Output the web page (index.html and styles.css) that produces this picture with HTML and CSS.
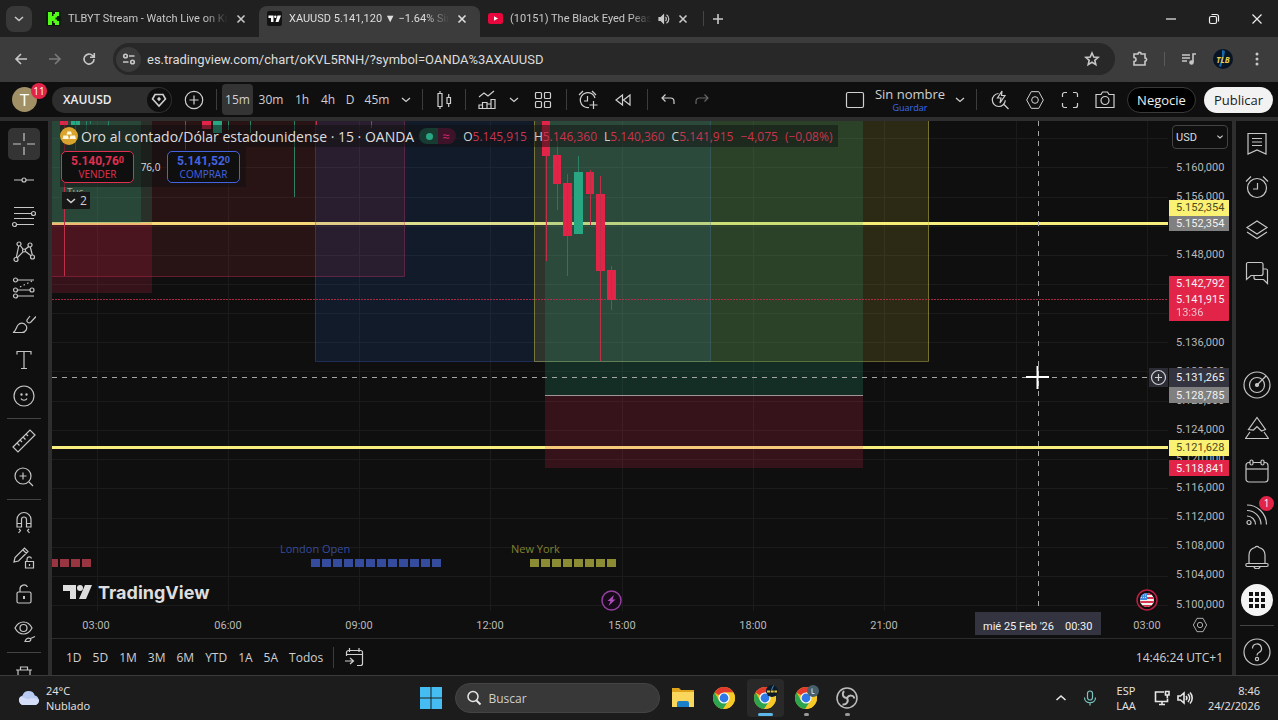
FILE: index.html
```html
<!DOCTYPE html>
<html lang="es">
<head>
<meta charset="utf-8">
<meta name="viewport" content="width=device-width, initial-scale=1">
<title>XAUUSD 5.141,120 ▼ −1.64% Sin nombre</title>
<link rel="stylesheet" href="styles.css">
</head>
<body>
<svg class="defs" aria-hidden="true">
  <symbol id="i-close" viewBox="0 0 12 12"><path d="M2.500 2.500l7 7M9.500 2.500l-7 7"/></symbol>
  <symbol id="i-down" viewBox="0 0 12 12"><path d="M2 4l4 3.500L10 4"/></symbol>
  <symbol id="i-settings" viewBox="0 0 24 24"><path d="M7.500 2h9l5.500 10-5.500 10h-9L2 12z"/><circle cx="12" cy="12" r="4"/></symbol>
  <symbol id="i-alarm" viewBox="0 0 24 24"><circle cx="12" cy="13" r="9.500"/><path d="M12.500 8v6H8M1 6.500l5-5M18 1.500l5 5"/></symbol>
  <symbol id="i-chrome" viewBox="0 0 24 24"><circle cx="12" cy="12" r="11" fill="#e8b921"/><path d="M12 12L2.500 6.500A11 11 0 0 1 21.500 6.500H12z" fill="#e23b2e"/><path d="M12 12L7.200 14.800 2.500 6.500A11 11 0 0 0 11.200 23l5.300-8.500z" fill="#2da44e"/><path d="M12 6.500h9.500A11 11 0 0 1 11.200 23l5.400-8.500z" fill="#f6c927"/><circle cx="12" cy="12" r="5.600" fill="#fff"/><circle cx="12" cy="12" r="4.400" fill="#2f78e8"/></symbol>
</svg>

<div class="window">
  <header class="tabstrip">
    <button class="tab-search" aria-label="Buscar pestañas"><svg class="ic s12 bold"><use href="#i-down"/></svg></button>
    <div class="tab">
      <svg class="favicon" viewBox="0 0 15 15"><rect width="15" height="15" rx="2" fill="#0c1c0a"/><path d="M2 1h4v4h1.500V3H9V1h4v4h-2v1.500H9.500v2H11V10h2v4H9v-2H7.500v-2H6v4H2z" fill="#53fc18"/></svg>
      <span class="tab-title">TLBYT Stream - Watch Live on Kick</span>
      <button class="tab-close" aria-label="Cerrar"><svg class="ic s12 bold"><use href="#i-close"/></svg></button>
    </div>
    <div class="tab active">
      <svg class="favicon" viewBox="0 0 15 15"><rect width="15" height="15" rx="2" fill="#131313"/><path d="M1.500 4.500h5V11H4V7H1.500zM10.500 4.500H14L11.500 11H8.500z" fill="#fff"/><circle cx="8.300" cy="5.700" r="1.200" fill="#fff"/></svg>
      <span class="tab-title">XAUUSD 5.141,120 ▼ −1.64% Sin nombre</span>
      <button class="tab-close" aria-label="Cerrar"><svg class="ic s12 bold"><use href="#i-close"/></svg></button>
    </div>
    <div class="tab">
      <svg class="favicon" viewBox="0 0 15 15"><rect y="2" width="15" height="11" rx="2.500" fill="#e8063c"/><path d="M6 5.200v4.600l4-2.300z" fill="#fff"/></svg>
      <span class="tab-title">(10151) The Black Eyed Peas - Greatest</span>
      <svg class="ic s12 speaker" viewBox="0 0 12 12"><path d="M1 4.500h2L5.500 2v8L3 7.500H1z"/><path d="M7.500 4a2.800 2.800 0 0 1 0 4M8.500 1.800a5 5 0 0 1 0 8.400"/></svg>
      <button class="tab-close" aria-label="Cerrar"><svg class="ic s12 bold"><use href="#i-close"/></svg></button>
    </div>
    <span class="tab-sep"></span>
    <button class="new-tab" aria-label="Nueva pestaña"><svg class="ic s12 bold" viewBox="0 0 12 12"><path d="M6 1v10M1 6h10"/></svg></button>
    <div class="win-controls">
      <button aria-label="Minimizar"><svg class="ic s12" viewBox="0 0 12 12"><path d="M1 6h10"/></svg></button>
      <button aria-label="Restaurar"><svg class="ic s12" viewBox="0 0 12 12"><rect x="1.500" y="3.500" width="7" height="7" rx="1.500"/><path d="M3.500 1.500h5a2 2 0 0 1 2 2v5"/></svg></button>
      <button aria-label="Cerrar ventana"><svg class="ic s12" viewBox="0 0 12 12"><path d="M1.500 1.500l9 9M10.500 1.500l-9 9"/></svg></button>
    </div>
  </header>

  <nav class="toolbar">
    <button class="nav-btn" aria-label="Atrás"><svg class="ic s16 bold" viewBox="0 0 16 16"><path d="M14 8H3M8 3L3 8l5 5"/></svg></button>
    <button class="nav-btn dim" aria-label="Adelante"><svg class="ic s16 bold" viewBox="0 0 16 16"><path d="M2 8h11M8 3l5 5-5 5"/></svg></button>
    <button class="nav-btn" aria-label="Recargar"><svg class="ic s16 bold" viewBox="0 0 16 16"><path d="M13 8a5 5 0 1 1-1.500-3.500L13.300 6.200M13.300 2v4.200H9"/></svg></button>
    <div class="omnibox">
      <button class="site-info" aria-label="Información del sitio"><svg class="ic s16 bold" viewBox="0 0 16 16"><circle cx="4.500" cy="5" r="1.800"/><path d="M8 5h5.500M2 11h5.500"/><circle cx="11.500" cy="11" r="1.800"/></svg></button>
      <input class="url" type="text" aria-label="Dirección" value="es.tradingview.com/chart/oKVL5RNH/?symbol=OANDA%3AXAUUSD">
      <button class="star" aria-label="Favorito"><svg class="ic s16 bold" viewBox="0 0 16 16"><path d="M8 2l1.800 4 4.300.4-3.300 2.900 1 4.300L8 11.300l-3.800 2.300 1-4.300L1.900 6.400 6.200 6z"/></svg></button>
    </div>
    <button class="ext" aria-label="Extensiones"><svg class="ic s16 bold" viewBox="0 0 16 16"><path d="M2 3h4a1.600 1.600 0 0 1 3.200 0H13v4a1.600 1.600 0 0 1 0 3.200V14H2v-3.500a2 2 0 0 0 0-4z"/></svg></button>
    <span class="bar-sep"></span>
    <button class="ext" aria-label="Multimedia"><svg class="ic s16 bold" viewBox="0 0 16 16"><path d="M1 4h8M1 7h8M1 10h5M12 11V3h3"/><circle cx="10.500" cy="11.500" r="1.500" fill="currentColor"/></svg></button>
    <button class="ext" aria-label="Perfil"><svg class="profile" viewBox="0 0 20 20"><circle cx="10" cy="10" r="10" fill="#071426"/><path d="M9 1l3 1-1 6-3 10-2-1 3-8z" fill="#1c67a8"/><text x="10" y="14" text-anchor="middle" class="tlb">TLB</text></svg></button>
    <button class="ext" aria-label="Menú"><svg class="ic s16 dots" viewBox="0 0 16 16"><circle cx="8" cy="3" r="1.500"/><circle cx="8" cy="8" r="1.500"/><circle cx="8" cy="13" r="1.500"/></svg></button>
  </nav>

  <main class="app">
    <div class="topbar">
      <button class="avatar">T<span class="badge">11</span></button>
      <div class="symbol"><button class="symbol-name">XAUUSD</button><button class="symbol-mark" aria-label="Marca"><svg class="ic s16 bold" viewBox="0 0 16 16"><path d="M4 2.500h8L14.500 7 8 14 1.500 7z"/><path d="M8 4.800l2 2.200-2 2.200L6 7z" fill="currentColor" stroke="none"/></svg></button></div>
      <button class="tb w34" aria-label="Comparar"><svg class="ic s20" viewBox="0 0 20 20"><circle cx="10" cy="10" r="8.700"/><path d="M10 5.500v9M5.500 10h9"/></svg></button>
      <span class="vsep"></span>
      <button class="tb tf on">15m</button><button class="tb tf w36">30m</button><button class="tb tf w26">1h</button><button class="tb tf w26">4h</button><button class="tb tf w18">D</button><button class="tb tf w36">45m</button>
      <button class="tb w22" aria-label="Más intervalos"><svg class="ic s12"><use href="#i-down"/></svg></button>
      <span class="vsep"></span>
      <button class="tb" aria-label="Velas"><svg class="ic s20" viewBox="0 0 20 20"><path d="M4 3.500h4v13H4zM6 1v2.500M6 16.500V19M13 7.500h3.500v6H13zM14.700 4v3.500M14.700 13.500V17"/></svg></button>
      <span class="vsep"></span>
      <button class="tb" aria-label="Indicadores"><svg class="ic s20" viewBox="0 0 20 20"><path d="M2 7l5-4 4 3 6-5M2 18.500v-3.500h3.500v3.500zM5.500 18.500v-6H10v6zM10 18.500v-4.500h4v4.500zM14 18.500V9.500h4v9z"/></svg></button>
      <button class="tb w22" aria-label="Favoritos"><svg class="ic s12"><use href="#i-down"/></svg></button>
      <button class="tb w36" aria-label="Plantillas"><svg class="ic s20" viewBox="0 0 20 20"><rect x="2.500" y="2.500" width="6" height="6" rx="1"/><rect x="11.500" y="2.500" width="6" height="6" rx="1"/><rect x="2.500" y="11.500" width="6" height="6" rx="1"/><rect x="11.500" y="11.500" width="6" height="6" rx="1"/></svg></button>
      <span class="vsep"></span>
      <button class="tb" aria-label="Alerta"><svg class="ic s20" viewBox="0 0 20 20"><path d="M17 8a7.500 7.500 0 1 0-6 9.500M9.500 6v5H6M1 5l4-4M14 1l4 4M11.500 15h8M15.500 11v8"/></svg></button>
      <button class="tb w38" aria-label="Repetición"><svg class="ic s20" viewBox="0 0 20 20"><path d="M9.500 5v10L3 10zM17 5v10l-6.500-5z"/></svg></button>
      <span class="vsep"></span>
      <button class="tb w30" aria-label="Deshacer"><svg class="ic s16" viewBox="0 0 16 16"><path d="M5.500 2.500L2 6l3.500 3.500M2 6h8.500a3.500 3.500 0 0 1 3.500 3.500V12"/></svg></button>
      <button class="tb w38 dim" aria-label="Rehacer"><svg class="ic s16" viewBox="0 0 16 16"><path d="M10.500 2.500L14 6l-3.500 3.500M14 6H5.500A3.500 3.500 0 0 0 2 9.500V12"/></svg></button>
      <span class="spring"></span>
      <button class="tb" aria-label="Diseño"><svg class="ic s20" viewBox="0 0 20 20"><rect x="1.500" y="2.500" width="17" height="15" rx="1.500"/></svg></button>
      <button class="layout-name">Sin nombre<small>Guardar</small></button>
      <button class="tb w22" aria-label="Diseños"><svg class="ic s12"><use href="#i-down"/></svg></button>
      <span class="vsep"></span>
      <button class="tb w35" aria-label="Búsqueda rápida"><svg class="ic s20" viewBox="0 0 20 20"><path d="M8.500 3.500a6.500 6.500 0 1 0 6.800 6.800M13.500 14l5 5M12 1L7.500 8H11l-1 5 5-7.500h-3.500z"/></svg></button>
      <button class="tb w35" aria-label="Configuración"><svg class="ic s20"><use href="#i-settings"/></svg></button>
      <button class="tb w35" aria-label="Pantalla completa"><svg class="ic s20" viewBox="0 0 20 20"><path d="M2.500 7V4.500a2 2 0 0 1 2-2H7M13 2.500h2.500a2 2 0 0 1 2 2V7M17.500 13v2.500a2 2 0 0 1-2 2H13M7 17.500H4.500a2 2 0 0 1-2-2V13"/></svg></button>
      <button class="tb w35" aria-label="Captura"><svg class="ic s20" viewBox="0 0 20 20"><path d="M1 4.500h5L7.500 2h5L14 4.500h5v13H1z"/><circle cx="10" cy="10.500" r="4"/></svg></button>
      <button class="pill dark">Negocie</button>
      <button class="pill light">Publicar</button>
    </div>

    <div class="workspace">
      <aside class="rail left">
        <button class="rail-btn on" aria-label="Cruz"><svg class="ic s24" viewBox="0 0 24 24"><path d="M12 1v8M12 15v8M1 12h8M15 12h8"/></svg></button>
        <button class="rail-btn" aria-label="Líneas"><svg class="ic s24" viewBox="0 0 24 24"><circle cx="12" cy="12" r="2"/><path d="M2 12h8M14 12h8"/></svg></button>
        <button class="rail-btn" aria-label="Fibonacci"><svg class="ic s24" viewBox="0 0 24 24"><path d="M2 3.500h20M2 9.500h17.500M2 14.500h20M4.500 20.500H22"/><circle cx="21.500" cy="9.500" r="2"/><circle cx="2.500" cy="20.500" r="2"/></svg></button>
        <button class="rail-btn" aria-label="Patrones"><svg class="ic s24" viewBox="0 0 24 24"><circle cx="7" cy="4" r="2"/><circle cx="18" cy="5" r="2"/><circle cx="4" cy="19.500" r="2"/><circle cx="20.500" cy="17" r="2"/><circle cx="12" cy="10.500" r="1.500"/><path d="M6.700 6L4.300 17.500M8.300 5.500l2.800 3.800M16.800 6.500L13 9.500M18.300 7l2 8M11 11.800L5 18M13.300 11.300l5.700 4.500"/></svg></button>
        <button class="rail-btn" aria-label="Proyección"><svg class="ic s24" viewBox="0 0 24 24"><circle cx="3.500" cy="4" r="2"/><circle cx="3.500" cy="14" r="2"/><circle cx="3.500" cy="20" r="2"/><circle cx="20" cy="14" r="2"/><path d="M5.500 4H22M5.500 14H18M5.500 20H22"/><path d="M8 11l12-6" stroke-dasharray="1.500 2.500"/></svg></button>
        <button class="rail-btn" aria-label="Pincel"><svg class="ic s24" viewBox="0 0 24 24"><path d="M1 20.500c3-1 3-5 5-7.500s6-2.500 8 .5-.5 7-4 7zM24 4.500l-5.500 6c-2 1-4-.5-3.500-2.500L18 4"/></svg></button>
        <button class="rail-btn" aria-label="Texto"><svg class="ic s24" viewBox="0 0 24 24"><path d="M5 6.500V3.500h14v3M12 3.500v17M9 20.500h6"/></svg></button>
        <button class="rail-btn" aria-label="Emoji"><svg class="ic s24" viewBox="0 0 24 24"><circle cx="12" cy="12" r="10"/><path d="M9 14.500c1 2.300 5 2.300 6 0"/><circle cx="9.500" cy="10.500" r=".6" fill="currentColor"/><circle cx="14.500" cy="10.500" r=".6" fill="currentColor"/></svg></button>
        <span class="hsep"></span>
        <button class="rail-btn" aria-label="Regla"><svg class="ic s24" viewBox="0 0 24 24"><path d="M1 18L18 1l5 5L6 23zM5 14l2.500 2.500M8 11l2 2M11 8l2.500 2.500M14 5l2 2"/></svg></button>
        <button class="rail-btn" aria-label="Acercar"><svg class="ic s24" viewBox="0 0 24 24"><circle cx="11" cy="11" r="8"/><path d="M17 17l4 4M11 7.500v7M7.500 11h7"/></svg></button>
        <span class="hsep"></span>
        <button class="rail-btn" aria-label="Imán"><svg class="ic s24" viewBox="0 0 24 24"><path d="M5 17V9.500a7 7 0 0 1 14 0V17h-4.500V9.500a2.500 2.500 0 0 0-5 0V17zM5 13.500h4.500M14.500 13.500H19M7 19l1.500 1.500L6.500 23M17 19l-1.500 1.500 2 2.500"/></svg></button>
        <button class="rail-btn" aria-label="Modo dibujo"><svg class="ic s24" viewBox="0 0 24 24"><path d="M2 16l1-4.500L12.500 2l3.500 3.500L6.500 15zM11 4l3.500 3.500M13.500 15.500h8v6.500h-8zM15 15.500V13a2.300 2.300 0 0 1 4.500-.5M17.500 18v2"/></svg></button>
        <button class="rail-btn" aria-label="Bloquear"><svg class="ic s24" viewBox="0 0 24 24"><rect x="5" y="10" width="14" height="11" rx="1.500"/><path d="M8 10V7a4 4 0 0 1 7.500-2"/><path d="M12 14v3" stroke-width="2"/></svg></button>
        <button class="rail-btn" aria-label="Ocultar"><svg class="ic s24" viewBox="0 0 24 24"><path d="M3 10c4-8 13-8 17 0-4 8-13 8-17 0z"/><circle cx="11.500" cy="10" r="3.500"/><path d="M13 23.500c1-3 3-4 5-3s0 3-1.500 3zM18.500 20.500l4.500-2"/></svg></button>
        <span class="hsep"></span>
        <button class="rail-btn" aria-label="Eliminar"><svg class="ic s24" viewBox="0 0 24 24"><path d="M4 7h16M8.500 7V4h7v3M6 7v14h12V7"/></svg></button>
      </aside>

      <section class="chart-area">
        <div class="plot">
          <svg class="plot-svg" viewBox="52 121 1116 490" preserveAspectRatio="xMinYMin slice">
            <path class="grid" d="M52 138.500H1168M52 167.500H1168M52 197.500H1168M52 226.500H1168M52 255.500H1168M52 284.500H1168M52 313.500H1168M52 342.500H1168M52 371.500H1168M52 401.500H1168M52 430.500H1168M52 459.500H1168M52 488.500H1168M52 518.500H1168M52 547.500H1168M52 576.500H1168M52 605.500H1168M97.500 121V611M228.500 121V611M359.500 121V611M490.500 121V611M622.500 121V611M753.500 121V611M884.500 121V611M1016.500 121V611M1147.500 121V611"/>
            <path class="level" d="M52 223.500H1168M52 447.500H1168"/>
            <rect class="f-red" x="52" y="121" width="352" height="155"/>
            <path class="b-red" d="M52 276.500H404.500V121"/>
            <rect class="f-blue" x="315" y="121" width="395" height="240"/>
            <path class="b-blue" d="M315.500 121V361.500H710.500V121"/>
            <rect class="f-yellow" x="534" y="121" width="395" height="240"/>
            <path class="b-yellow" d="M534.500 121V361.500H928.500V121"/>
            <rect class="f-green" x="52" y="121" width="100" height="102"/>
            <rect class="f-green" x="52" y="121" width="89" height="102"/>
            <rect class="f-loss" x="52" y="223" width="100" height="70"/>
            <rect class="f-green" x="545" y="121" width="318" height="274"/>
            <rect class="f-loss" x="545" y="395" width="318" height="73"/>
            <path class="entry" d="M545 395.500H863"/>
            <g class="up">
              <rect x="71" y="121" width="9" height="4"/><rect x="213" y="121" width="9" height="12"/><rect x="574" y="172" width="9" height="62"/>
              <path d="M75.500 121V150M86.500 121V131M90.500 121V124M108.500 121V126M228.500 121V130M250.500 121V133M294.500 121V197M578.500 156V172"/>
            </g>
            <g class="down">
              <rect x="60" y="121" width="8" height="4"/><rect x="202" y="121" width="9" height="8"/>
              <rect x="542" y="121" width="8" height="35"/><rect x="553" y="155" width="8" height="29"/><rect x="563" y="183" width="9" height="53"/><rect x="586" y="172" width="8" height="22"/><rect x="596" y="194" width="9" height="77"/><rect x="607" y="270" width="9" height="30"/>
              <path d="M64.500 121V276M185.500 121V150M316.500 121V125M371.500 121V128M546.500 155V261M557.500 138V210M567.500 174V276M590.500 170V225M600.500 176V361M611.500 266V310"/>
            </g>
            <path class="last" d="M52 299.500H1168"/>
            <path class="s-red" d="M52 563H58M60 563H69M71 563H80M82 563H91"/>
            <path class="s-blue" d="M311 563H442"/>
            <path class="s-yellow" d="M530 563H617"/>
            <text class="t-blue" x="280" y="553">London Open</text>
            <text class="t-yellow" x="511" y="553">New York</text>
            <g class="tvlogo"><path d="M63 585h13v14h-6v-8h-7zM85 585h7l-6 14h-7z"/><circle cx="80" cy="588" r="3"/><text x="98" y="599">TradingView</text></g>
            <circle cx="611.500" cy="600.500" r="9.500" class="event"/><path class="bolt" d="M614 595l-6.500 6h3l-2 5 7-6.500h-3z"/>
            <circle cx="1147" cy="600" r="10" fill="#16090d" stroke="#b92143" stroke-width="1.500"/>
            <clipPath id="flag"><circle cx="1147" cy="600" r="7"/></clipPath>
            <g clip-path="url(#flag)"><path fill="#f3f3f3" d="M1140 593h14v14h-14z"/><path stroke="#d9344f" stroke-width="2" d="M1140 594h14M1140 598h14M1140 602h14M1140 606h14"/><path fill="#3d8be0" d="M1140 593h7v7h-7z"/><path d="M1141 595h6M1141 597.500h6" stroke="#cfe2f7" stroke-dasharray="1 1"/></g>
            <path class="cross" d="M52 377.500H1147M1038.500 121V611"/>
            <path class="pointer" d="M1026 377H1049M1037.500 366V389"/>
            <rect x="1149" y="368" width="19" height="19" fill="#2b2c36"/><circle cx="1158.500" cy="377.500" r="7" class="plus"/><path class="plus" d="M1155 377.500h7M1158.500 374v7"/>
          </svg>
          <div class="legend">
            <div class="legend-row">
              <svg class="gold" viewBox="0 0 18 18"><circle cx="9" cy="9" r="9" fill="#d9a42e"/><path d="M6.500 7.500l1-3h3.500l1 3zM2.500 12l1-3.500H8l.8 3.500zM9.500 12l1-3.500H15l1 3.500z" fill="#fff7df"/></svg>
              <span class="legend-title">Oro al contado/Dólar estadounidense · 15 · OANDA</span>
              <span class="status"><i></i><b>≈</b></span>
              <span class="ohlc"><span>O<em>5.145,915</em></span><span>H<em>5.146,360</em></span><span>L<em>5.140,360</em></span><span>C<em>5.141,915</em></span><span><em>−4,075</em></span><span><em>(−0,08%)</em></span></span>
            </div>
            <div class="trade-row">
              <button class="trade sell"><b>5.140,76<sup>0</sup></b>VENDER</button>
              <span class="spread">76,0</span>
              <button class="trade buy"><b>5.141,52<sup>0</sup></b>COMPRAR</button>
            </div>
            <div class="hidden-label">Tus</div>
            <button class="collapse"><svg class="ic s12 bold"><use href="#i-down"/></svg>2</button>
          </div>
        </div>
        <div class="price-axis">
          <svg class="axis-svg" viewBox="1168 121 64 490" preserveAspectRatio="xMinYMin slice">
            <g class="ax"><text x="1176" y="171">5.160,000</text><text x="1176" y="200">5.156,000</text><text x="1176" y="258">5.148,000</text><text x="1176" y="346">5.136,000</text><text x="1176" y="375">5.132,000</text><text x="1176" y="404">5.128,000</text><text x="1176" y="433">5.124,000</text><text x="1176" y="462">5.120,000</text><text x="1176" y="491">5.116,000</text><text x="1176" y="520">5.112,000</text><text x="1176" y="549">5.108,000</text><text x="1176" y="578">5.104,000</text><text x="1176" y="608">5.100,000</text></g>
            <path fill="#fbf173" d="M1169 200h60v16h-60zM1169 440h60v16h-60z"/>
            <path fill="#808080" d="M1169 216h60v15h-60zM1169 387h60v16h-60z"/>
            <path fill="#e22449" d="M1169 276h60v44a1 1 0 0 1-1 1h-59zM1169 460h60v16h-60z"/>
            <path fill="#33343f" d="M1169 368h60v19h-60z"/>
            <g class="tagdark"><text x="1176" y="211">5.152,354</text><text x="1176" y="451">5.121,628</text></g>
            <g class="tag"><text x="1176" y="227">5.152,354</text><text x="1176" y="287">5.142,792</text><text x="1176" y="303">5.141,915</text><text x="1176" y="316" opacity=".75">13:36</text><text x="1176" y="381">5.131,265</text><text x="1176" y="399">5.128,785</text><text x="1176" y="472">5.118,841</text></g>
          </svg>
          <label class="currency"><select aria-label="Moneda"><option>USD</option></select><svg class="ic s12 bold"><use href="#i-down"/></svg></label>
        </div>
        <div class="time-axis">
          <svg class="axis-svg" viewBox="52 611 1116 27" preserveAspectRatio="xMinYMin slice">
            <g class="ax mid"><text x="96" y="629">03:00</text><text x="228" y="629">06:00</text><text x="359" y="629">09:00</text><text x="490" y="629">12:00</text><text x="622" y="629">15:00</text><text x="753" y="629">18:00</text><text x="884" y="629">21:00</text><text x="1147" y="629">03:00</text></g>
            <path fill="#33343f" d="M975 612h126v23h-126z"/>
            <g class="tag"><text x="983" y="630">mié 25 Feb '26</text><text x="1065" y="630">00:30</text></g>
          </svg>
        </div>
        <button class="axis-gear" aria-label="Ajustes del eje"><svg class="ic s16"><use href="#i-settings"/></svg></button>
        <div class="ranges">
          <button>1D</button><button>5D</button><button>1M</button><button>3M</button><button>6M</button><button>YTD</button><button>1A</button><button>5A</button><button>Todos</button>
          <span class="vsep"></span>
          <button aria-label="Ir a"><svg class="ic s20" viewBox="0 0 20 20"><path d="M2.500 9V5.500a2 2 0 0 1 2-2h12a2 2 0 0 1 2 2v11a2 2 0 0 1-2 2H13M2.500 7.500h16M5.500 1v4M15 1v4M1 14h8M6 11l3.500 3L6 17"/></svg></button>
          <span class="clock">14:46:24 UTC+1</span>
        </div>
      </section>

      <aside class="rail right">
        <button class="rail-btn" aria-label="Lista"><svg class="ic s24" viewBox="0 0 24 24"><path d="M3 1.500h18v20.500l-9-4-9 4zM7 6.500h10M7 10h10M7 13.500h10"/></svg></button>
        <button class="rail-btn" aria-label="Alertas"><svg class="ic s24"><use href="#i-alarm"/></svg></button>
        <button class="rail-btn" aria-label="Capas"><svg class="ic s24" viewBox="0 0 24 24"><path d="M12 3l10 6.500L12 16 2 9.500zM2 14l10 6.500L22 14"/></svg></button>
        <button class="rail-btn" aria-label="Chats"><svg class="ic s24" viewBox="0 0 24 24"><path d="M3 1.500h13a2 2 0 0 1 2 2v9a2 2 0 0 1-2 2H6l-4.500 4V3a1.500 1.500 0 0 1 1.500-1.500zM18 8h3a1.500 1.500 0 0 1 1.500 1.500V22.500l-4-4H11a2 2 0 0 1-2-2v-2"/></svg></button>
        <span class="spring"></span>
        <button class="rail-btn" aria-label="Analizador"><svg class="ic s28" viewBox="0 0 28 28"><circle cx="14" cy="14" r="13"/><circle cx="14" cy="14" r="7.500" /><circle cx="14" cy="14" r="1.500" fill="currentColor"/><path d="M14 14l9-9"/></svg></button>
        <button class="rail-btn" aria-label="Pine"><svg class="ic s24" viewBox="0 0 24 24"><path d="M12 1.500l8.500 12-4 1.500-4.500-4.500-3.500 3.500-5-.5zM5 16L.5 22.500h23L19 16"/></svg></button>
        <button class="rail-btn" aria-label="Calendario"><svg class="ic s24" viewBox="0 0 24 24"><rect x="1" y="3.500" width="22" height="19.500" rx="3"/><path d="M1 10h22"/><rect x="5" y="1" width="3" height="5" rx="1.500" fill="#0f0f0f"/><rect x="16" y="1" width="3" height="5" rx="1.500" fill="#0f0f0f"/></svg></button>
        <button class="rail-btn" aria-label="Noticias"><svg class="ic s24" viewBox="0 0 24 24"><circle cx="4" cy="20.500" r="2"/><path d="M2 14a8.500 8.500 0 0 1 8.500 8.500M2 8.500a14 14 0 0 1 14 14M2 3a19.500 19.500 0 0 1 19.500 19.500"/></svg><span class="badge">1</span></button>
        <button class="rail-btn" aria-label="Notificaciones"><svg class="ic s24" viewBox="0 0 24 24"><path d="M4 18.500V10a8 8 0 0 1 6-7.500c1-1.500 3-1.500 4 0a8 8 0 0 1 6 7.500v8.500M2 18.500h20c1.500 0 1.500 3 0 3H2c-1.500 0-1.500-3 0-3zM9 21.500c0 3 6 3 6 0"/></svg></button>
        <button class="rail-btn" aria-label="Aplicaciones"><span class="apps"><svg viewBox="0 0 18 18"><path d="M1 1h4v4H1zM7 1h4v4H7zM13 1h4v4h-4zM1 7h4v4H1zM7 7h4v4H7zM13 7h4v4h-4zM1 13h4v4H1zM7 13h4v4H7zM13 13h4v4h-4z"/></svg></span></button>
        <span class="hsep"></span>
        <button class="rail-btn help" aria-label="Ayuda"><svg class="ic s28" viewBox="0 0 28 28"><circle cx="14" cy="14" r="13"/><path d="M9.500 10.500a4.500 4.500 0 1 1 6.500 4c-1.500.8-2 1.500-2 3"/><circle cx="14" cy="21" r="1.600"/></svg></button>
      </aside>
    </div>
  </main>

  <footer class="taskbar">
    <div class="weather">
      <svg viewBox="0 0 24 16"><path d="M6 15a5 5 0 0 1-.5-9.500 6.500 6.500 0 0 1 12.300 0A5 5 0 0 1 18.500 15z" fill="#b9cbf3"/><path d="M6 15a5 5 0 0 1-3-8c3-1 5 2 7 2s7-2 12 .5A5 5 0 0 1 18.500 15z" fill="#d5def8"/></svg>
      <span>24°C<br>Nublado</span>
    </div>
    <div class="task-center">
      <button class="start" aria-label="Inicio"><svg viewBox="0 0 22 22"><path d="M0 0h10.500v10.500H0zM11.500 0H22v10.500H11.500zM0 11.500h10.500V22H0zM11.500 11.500H22V22H11.500z" fill="#45bdf2"/></svg></button>
      <label class="search"><svg class="ic s16" viewBox="0 0 16 16"><circle cx="7" cy="6.500" r="5" stroke-width="1.500"/><path d="M10.500 10.500L14.500 14.500" stroke-width="2"/></svg><input type="text" placeholder="Buscar" aria-label="Buscar"></label>
      <button class="task" aria-label="Explorador"><svg viewBox="0 0 24 24"><path d="M1 2h7l2 2h13v17H1z" fill="#e0a31e"/><path d="M1 6h22v15H1z" fill="#fbd65c"/><path d="M6 21v-4a2 2 0 0 1 2-2h8a2 2 0 0 1 2 2v4z" fill="#1b7fc9"/></svg></button>
      <button class="task" aria-label="Chrome"><svg><use href="#i-chrome"/></svg></button>
      <button class="task current" aria-label="Chrome, TLB"><svg><use href="#i-chrome"/></svg><svg class="mini" viewBox="0 0 12 12"><circle cx="6" cy="6" r="6" fill="#0c1a26"/><path d="M7.500.5L5.500 5" stroke="#3a8fd0"/><path d="M1 6.500h10" stroke="#e8c534" stroke-width="2" stroke-dasharray="3 .7"/></svg></button>
      <button class="task running" aria-label="Chrome, L"><svg><use href="#i-chrome"/></svg><svg class="mini" viewBox="0 0 12 12"><circle cx="6" cy="6" r="6" fill="#48606b"/><path d="M5 3.500v5h2.500" stroke="#d6dde0" fill="none"/></svg></button>
      <button class="task running" aria-label="OBS"><svg viewBox="0 0 24 24" fill="none" stroke="#bdbdbd" stroke-width="1.500"><circle cx="12" cy="12" r="10"/><path d="M12 12c-4 0-5.500-4-3-7M12 12c2 3.500-.5 7-4.500 6.500M12 12c2-3.500 6.500-3 7.500.5" stroke-width="2"/></svg></button>
    </div>
    <div class="tray">
      <button class="tray-btn" aria-label="Iconos ocultos"><svg class="ic s12 bold" viewBox="0 0 12 12"><path d="M1.500 8L6 4l4.500 4"/></svg></button>
      <button class="tray-btn" aria-label="Micrófono"><svg class="ic s16 mic" viewBox="0 0 16 16"><rect x="5.500" y="1" width="5" height="9" rx="2.500"/><path d="M2.500 7.500c0 7 11 7 11 0M8 13v2.500"/></svg></button>
      <span class="lang">ESP<br>LAA</span>
      <button class="tray-btn net" aria-label="Red y sonido"><svg class="ic s16 bold" viewBox="0 0 16 16"><path d="M10 2H1.500v9.500h12V8.500M5 14.500h6M8 11.500v3M11.500 1.500h3.500v3.500h-3.500zM13.300 5v3"/></svg><svg class="ic s16 bold" viewBox="0 0 16 16"><path d="M1 6h2.500L7 3v10l-3.500-3H1zM9 6a3 3 0 0 1 0 4M11 4a6 6 0 0 1 0 8M13 2.500a8 8 0 0 1 0 11"/></svg></button>
      <span class="datetime">8:46<br>24/2/2026</span>
    </div>
  </footer>
</div>
</body>
</html>
```

FILE: styles.css
```css
:root {
  --bg: #0f0f0f;
  --line: #2e2e2e;
  --text: #d0d0d0;
  --chrome: #3c3c3c;
  --red: #e22449;
}

* { box-sizing: border-box; }

body {
  margin: 0;
  background: var(--bg);
  color: var(--text);
  font-family: "Open Sans", "Noto Sans", sans-serif;
  font-size: 13px;
}

button, input, select {
  margin: 0;
  padding: 0;
  border: 0;
  background: none;
  color: inherit;
  font: inherit;
}

button {
  display: flex;
  align-items: center;
  justify-content: center;
  flex: none;
}

.defs { position: absolute; width: 0; height: 0; }

.ic { fill: none; stroke: currentColor; stroke-width: 1.2; flex: none; display: block; }
.ic.bold { stroke-width: 1.6; }
.s12 { width: 12px; height: 12px; }
.s16 { width: 16px; height: 16px; }
.s20 { width: 20px; height: 20px; }
.s24 { width: 24px; height: 24px; }
.s28 { width: 28px; height: 28px; }
.dim { opacity: .45; }
.spring { flex: 1; }

.window { display: flex; flex-direction: column; height: 100vh; }

/* Browser tabs */
.tabstrip {
  display: flex;
  align-items: center;
  flex: none;
  height: 37px;
  padding-left: 6px;
  background: #202020;
  color: #c8c8c8;
  font: 11px Roboto, sans-serif;
}
.tab-search { width: 26px; height: 26px; border-radius: 8px; background: #383838; margin-right: 6px; }
.tab {
  display: flex;
  align-items: center;
  align-self: flex-end;
  gap: 7px;
  width: 221px;
  height: 31px;
  padding: 0 12px 6px 8px;
}
.tab.active { background: var(--chrome); border-radius: 8px 8px 0 0; color: #dedede; }
.favicon { width: 15px; height: 15px; flex: none; }
.tab-title {
  flex: 1;
  overflow: hidden;
  white-space: nowrap;
  mask-image: linear-gradient(90deg, #000 85%, transparent);
}
.tab-close { width: 12px; height: 20px; }
.speaker path:first-child { fill: currentColor; }
.tab-sep { width: 1px; height: 15px; background: #454545; margin: 0 8px 0 2px; }
.new-tab { width: 12px; height: 24px; }
.win-controls { display: flex; margin-left: auto; color: #eee; }
.win-controls button { width: 43px; height: 36px; }

/* Address bar */
.toolbar {
  display: flex;
  align-items: center;
  flex: none;
  height: 45px;
  padding: 0 4px 1px;
  background: var(--chrome);
  color: #c8c8c8;
}
.nav-btn { width: 34px; height: 32px; }
.omnibox {
  display: flex;
  align-items: center;
  flex: 1;
  height: 32px;
  margin: 0 8px 0 7px;
  padding: 0 15px 0 3px;
  border-radius: 16px;
  background: #282828;
}
.site-info { width: 25px; height: 25px; border-radius: 50%; background: #3a3a3a; }
.url { flex: 1; min-width: 0; padding-left: 6px; color: #dcdcdc; font: 13px Roboto, sans-serif; }
.ext { width: 34px; height: 32px; }
.bar-sep { width: 1px; height: 14px; background: #5a5a5a; margin: 0 7px; }
.profile { width: 20px; height: 20px; }
.tlb { font: italic 700 8px "Open Sans", sans-serif; fill: #e9cf45; }
.dots { fill: currentColor; stroke: none; }

/* Chart top bar */
.app { display: flex; flex-direction: column; flex: 1; min-height: 0; gap: 4px; background: var(--line); }
.topbar {
  display: flex;
  align-items: center;
  flex: none;
  height: 35px;
  padding: 0 5px 0 12px;
  background: var(--bg);
}
.avatar {
  position: relative;
  width: 25px;
  height: 25px;
  border-radius: 50%;
  background: #a18f66;
  color: #fff;
  font-size: 17px;
}
.badge {
  position: absolute;
  top: -4px;
  right: -10px;
  min-width: 16px;
  height: 16px;
  border-radius: 8px;
  background: var(--red);
  color: #fff;
  font-size: 10px;
  line-height: 16px;
  text-align: center;
}
.symbol {
  display: flex;
  align-items: center;
  justify-content: space-between;
  width: 120px;
  height: 26px;
  margin: 0 5px 0 15px;
  padding: 0 1px 0 11px;
  border-radius: 13px;
  background: var(--line);
}
.symbol-name { color: #eee; font-size: 12px; font-weight: 600; }
.symbol-mark { width: 24px; height: 24px; border-radius: 50%; background: var(--bg); }
.tb { width: 32px; height: 31px; border-radius: 4px; }
.tf { font-size: 12px; }
.tb.on { width: 31px; background: #343434; }
.w18 { width: 18px; }
.w22 { width: 22px; }
.w26 { width: 26px; }
.w30 { width: 30px; }
.w34 { width: 34px; }
.w35 { width: 35px; }
.w36 { width: 36px; }
.w38 { width: 38px; }
.vsep { width: 1px; height: 21px; margin: 0 5px; flex: none; background: #3d3d3d; }
.layout-name { flex-direction: column; width: 78px; font-size: 13px; line-height: 15px; }
.layout-name small { color: #3b6cf0; font-size: 9px; line-height: 11px; }
.pill { width: 69px; height: 26px; margin-left: 5px; border-radius: 13px; font-size: 13px; }
.pill.dark { background: #000; border: 1px solid #3a3a3a; color: #eee; }
.pill.light { margin-left: 8px; background: #f2f2f2; color: #1a1a1a; }

/* Rails */
.workspace { display: flex; flex: 1; min-height: 0; gap: 4px; }
.rail {
  display: flex;
  flex-direction: column;
  align-items: center;
  flex: none;
  overflow: hidden;
  background: var(--bg);
  color: #c6c6c6;
}
.rail.left { width: 48px; padding-top: 5px; }
.rail.right { width: 42px; padding: 1px 0 9px; }
.rail-btn { position: relative; width: 32px; height: 36px; }
.left .rail-btn.on { height: 32px; margin: 2px 0; border-radius: 5px; background: #343434; }
.right .rail-btn { height: 43px; }
.right .help { height: 28px; }
.right .badge { top: 4px; right: -1px; min-width: 15px; height: 15px; line-height: 15px; }
.hsep { width: 34px; height: 1px; margin: 4px 0; flex: none; background: #444; }
.right .hsep { margin: 4px 0 12px; }
.apps { display: grid; place-items: center; width: 32px; height: 32px; border-radius: 50%; background: #f4f4f4; }
.apps svg { width: 18px; height: 18px; fill: #111; }

/* Chart */
.chart-area {
  display: grid;
  flex: 1;
  min-width: 0;
  grid-template-columns: minmax(0, 1fr) 64px;
  grid-template-rows: minmax(0, 1fr) 27px 37px;
  background: var(--bg);
}
.plot, .price-axis { position: relative; overflow: hidden; }
.plot-svg, .axis-svg { display: block; width: 100%; height: 100%; }
.grid { stroke: #1b1b1b; }
.level { stroke: #f8ee80; stroke-width: 3; }
.f-red { fill: rgba(242, 54, 69, .11); }
.f-blue { fill: rgba(41, 118, 235, .12); }
.f-yellow { fill: rgba(255, 235, 59, .12); }
.f-green { fill: rgba(38, 163, 125, .2); }
.f-loss { fill: rgba(235, 36, 75, .18); }
.b-red, .b-blue, .b-yellow { fill: none; }
.b-red { stroke: rgba(200, 45, 85, .45); }
.b-blue { stroke: rgba(50, 90, 190, .4); }
.b-yellow { stroke: rgba(190, 185, 70, .5); }
.entry { stroke: #a0969a; }
.up rect { fill: #29a783; }
.up path { stroke: #2f8068; }
.down rect { fill: var(--red); }
.down path { stroke: #bd3048; }
.last { stroke: #d02c50; stroke-dasharray: 2 1; stroke-opacity: .8; }
.s-red, .s-blue, .s-yellow { stroke-width: 8; }
.s-red { stroke: #983540; }
.s-blue { stroke: #354b9d; stroke-dasharray: 9 2; }
.s-yellow { stroke: #8c8c35; stroke-dasharray: 9 2; }
.t-blue, .t-yellow { font-size: 11px; }
.t-blue { fill: #354b9d; }
.t-yellow { fill: #82822f; }
.tvlogo { fill: #dedede; }
.tvlogo text { font: 700 18px Inter, sans-serif; }
.event { fill: #160a19; stroke: #93409f; stroke-width: 1.5; }
.bolt { fill: #b04dbd; }
.cross { fill: none; stroke: #a6a6a6; stroke-dasharray: 5 5; }
.pointer { stroke: #fff; stroke-width: 2; }
.plus { fill: none; stroke: #d0d0d0; stroke-width: 1.2; }
.axis-svg text { font: 11px Roboto, sans-serif; }
.ax { fill: #b8b8b8; }
.mid { text-anchor: middle; }
.tag { fill: #f2f2f2; }
.tagdark { fill: #4b4822; }

.legend {
  position: absolute;
  top: 4px;
  left: 8px;
  display: flex;
  flex-direction: column;
  align-items: flex-start;
}
.legend-row {
  display: flex;
  align-items: center;
  height: 22px;
  padding-right: 6px;
  background: rgba(15, 15, 15, .5);
  white-space: nowrap;
}
.gold { width: 18px; height: 18px; }
.legend-title { margin-left: 3px; font-size: 14px; color: #dedede; }
.status {
  display: flex;
  align-items: center;
  gap: 9px;
  width: 37px;
  height: 16px;
  margin: 0 7px 0 5px;
  padding-left: 7px;
  border-radius: 8px;
  background: linear-gradient(90deg, #173b31 50%, #3c1328 50%);
}
.status i { width: 7px; height: 7px; border-radius: 50%; background: #2ba684; }
.status b { color: #d02a6e; font-size: 13px; font-weight: 400; line-height: 14px; }
.ohlc { display: flex; gap: 7px; font-size: 12px; }
.ohlc em { color: #c93450; font-style: normal; }
.trade-row {
  display: flex;
  align-items: center;
  height: 40px;
  padding: 0 6px 0 1px;
  background: rgba(15, 15, 15, .5);
}
.trade {
  flex-direction: column;
  width: 73px;
  height: 32px;
  border: 1px solid;
  border-radius: 5px;
  background: var(--bg);
  font-size: 10px;
  line-height: 13px;
}
.trade b { font: 700 12px/14px Roboto, sans-serif; }
.trade sup { font-size: 9px; line-height: 0; vertical-align: 2px; }
.sell { color: #e02f50; }
.buy { color: #4463e0; }
.spread { width: 33px; color: #ddd; font-size: 10px; text-align: center; }
.hidden-label { height: 5px; margin-left: 7px; overflow: hidden; color: #aaa; font-size: 10px; line-height: 10px; }
.collapse { gap: 3px; width: 28px; height: 17px; margin-left: 2px; background: #171717; font-size: 12px; }

.price-axis { grid-column: 2; }
.currency {
  position: absolute;
  top: 4px;
  left: 4px;
  display: flex;
  align-items: center;
  width: 56px;
  height: 24px;
  padding: 0 3px;
  border: 1px solid #434343;
  border-radius: 4px;
}
.currency select { flex: 1; appearance: none; color: #dedede; font: 11px Roboto, sans-serif; }
.currency .ic { width: 8px; height: 8px; }
.axis-gear { height: 27px; }
.ranges {
  grid-column: 1 / -1;
  display: flex;
  align-items: center;
  gap: 11px;
  padding: 0 9px 0 14px;
  border-top: 1px solid #2c2c2c;
  font-size: 12px;
}
.ranges .vsep { margin: 0 -1px; }
.clock { margin-left: auto; }

/* Taskbar */
.taskbar {
  display: grid;
  grid-template-columns: 1fr auto 1fr;
  align-items: center;
  flex: none;
  height: 45px;
  border-top: 1px solid #3a3a3a;
  background: #1c1c1c;
  color: #e6e6e6;
  font-size: 11px;
  line-height: 15px;
}
.weather { display: flex; align-items: center; gap: 5px; padding-left: 17px; }
.weather svg { width: 24px; height: 16px; }
.task-center { display: flex; align-items: center; margin-left: 9px; }
.start { width: 23px; height: 30px; margin-right: 12px; }
.start svg { width: 22px; height: 22px; }
.search {
  display: flex;
  align-items: center;
  gap: 7px;
  width: 205px;
  height: 30px;
  margin-right: 3px;
  padding: 0 10px;
  border: 1px solid #444;
  border-radius: 15px;
  background: #383838;
}
.search input { width: 140px; font-size: 12px; }
.search input::placeholder { color: #cfcfcf; opacity: 1; }
.task { position: relative; width: 37px; height: 38px; margin: 0 2px; border-radius: 4px; }
.task svg { width: 24px; height: 24px; }
.task .mini { position: absolute; top: 6px; right: 6px; width: 12px; height: 12px; }
.task.current { background: #292929; }
.task.current::after, .task.running::after {
  content: "";
  position: absolute;
  bottom: 1px;
  width: 5px;
  height: 3px;
  border-radius: 2px;
  background: #999;
}
.task.current::after { width: 15px; background: #5cb8ea; }
.tray { display: flex; align-items: center; justify-content: flex-end; padding-right: 18px; }
.tray-btn { width: 29px; height: 30px; }
.mic { color: #7ac5c0; }
.lang { width: 44px; text-align: center; }
.tray-btn.net { width: 50px; gap: 7px; }
.datetime { width: 62px; text-align: right; }
```
